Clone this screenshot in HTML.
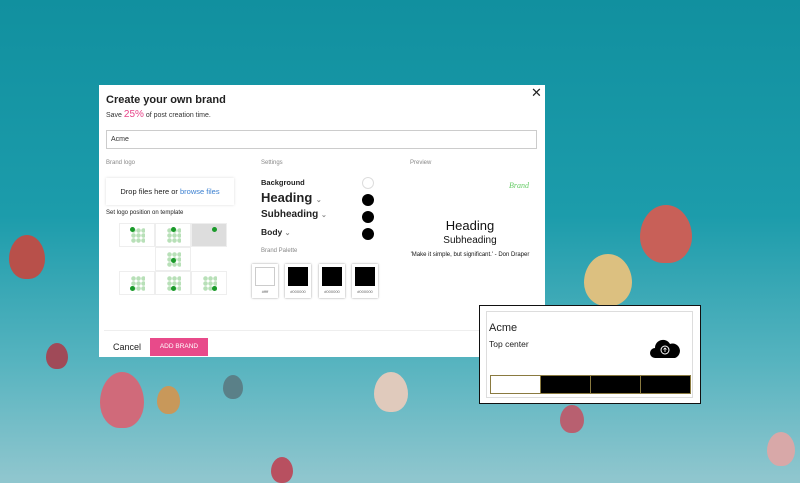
<!DOCTYPE html>
<html><head><style>
*{margin:0;padding:0;box-sizing:border-box}
html{background:#8fc6ce}
body{width:800px;height:479px;overflow:hidden;position:relative;font-family:"Liberation Sans",sans-serif;background:linear-gradient(180deg,#11909f 0%,#1c9cab 45%,#55b3bf 75%,#8fc6ce 100%)}
.a{position:absolute}
.b{position:absolute;border-radius:50% 50% 45% 45%/55% 55% 45% 45%}
.modal{left:99px;top:85px;width:446px;height:272px;background:#fff}
.cell{position:absolute;width:36px;height:24px;border:1px solid #eee;background:#fff}
.dots{position:absolute;left:11px;top:4px;width:14px;height:15px;background:radial-gradient(circle,#b8e0b8 2px,transparent 2.5px) 0 0/5px 5px}
.gd{position:absolute;width:5px;height:5px;border-radius:50%;background:#1a9a2a}
.sw{position:absolute;width:26px;height:34px;background:#fff;box-shadow:0 0 2px #999}
.sw i{position:absolute;left:3px;top:3px;width:20px;height:19px;background:#000}
.sw b{position:absolute;left:0;right:0;top:25px;font-size:4px;text-align:center;color:#666;font-weight:normal}
.dot{position:absolute;left:263px;width:12px;height:12px;border-radius:50%;background:#000}
</style></head><body>
<div class="b" style="left:9px;top:235px;width:36px;height:44px;background:#b8504a"></div>
<div class="b" style="left:640px;top:205px;width:52px;height:58px;background:#c86058"></div>
<div class="b" style="left:584px;top:254px;width:48px;height:52px;background:#dcc080"></div>
<div class="b" style="left:46px;top:343px;width:22px;height:26px;background:#a04a58"></div>
<div class="b" style="left:100px;top:372px;width:44px;height:56px;background:#d06a7a"></div>
<div class="b" style="left:157px;top:386px;width:23px;height:28px;background:#c8985a"></div>
<div class="b" style="left:223px;top:375px;width:20px;height:24px;background:#5a8088"></div>
<div class="b" style="left:374px;top:372px;width:34px;height:40px;background:#e0cabc"></div>
<div class="b" style="left:560px;top:405px;width:24px;height:28px;background:#b86070"></div>
<div class="b" style="left:271px;top:457px;width:22px;height:26px;background:#b85060"></div>
<div class="b" style="left:767px;top:432px;width:28px;height:34px;background:#d8a8a8"></div>

<div class="a modal">
<div class="a" style="left:432px;top:0px;font-size:13px;color:#222">✕</div>
<div class="a" style="left:7px;top:9px;font-size:11px;font-weight:bold;color:#222">Create your own brand</div>
<div class="a" style="left:7px;top:24px;font-size:7px;color:#333">Save <span style="color:#e8458a;font-size:10px">25%</span> of post creation time.</div>
<div class="a" style="left:7px;top:45px;width:431px;height:19px;border:1px solid #ccc;font-size:7px;padding:5px 4px;color:#333">Acme</div>
<div class="a" style="left:7px;top:75px;font-size:6px;color:#888">Brand logo</div>
<div class="a" style="left:162px;top:75px;font-size:6px;color:#888">Settings</div>
<div class="a" style="left:311px;top:75px;font-size:6px;color:#888">Preview</div>
<div class="a" style="left:7px;top:93px;width:128px;height:27px;box-shadow:0 0 3px #ddd;font-size:7.5px;color:#222;text-align:center;line-height:27px">Drop files here or <span style="color:#3a7fd0">browse files</span></div>
<div class="a" style="left:7px;top:125px;font-size:6px;color:#222">Set logo position on template</div>
<div class="a" style="left:20px;top:138px;width:108px;height:72px">
 <div class="cell" style="left:0;top:0"><div class="dots"></div><div class="gd" style="left:10px;top:3px"></div></div>
 <div class="cell" style="left:36px;top:0"><div class="dots"></div><div class="gd" style="left:15px;top:3px"></div></div>
 <div class="cell" style="left:72px;top:0;background:#ddd"><div class="gd" style="left:20px;top:3px"></div></div>
 <div class="cell" style="left:36px;top:24px"><div class="dots"></div><div class="gd" style="left:15px;top:10px"></div></div>
 <div class="cell" style="left:0;top:48px"><div class="dots"></div><div class="gd" style="left:10px;top:14px"></div></div>
 <div class="cell" style="left:36px;top:48px"><div class="dots"></div><div class="gd" style="left:15px;top:14px"></div></div>
 <div class="cell" style="left:72px;top:48px"><div class="dots"></div><div class="gd" style="left:20px;top:14px"></div></div>
</div>
<div class="a" style="left:162px;top:93px;font-size:7.5px;font-weight:bold;color:#222">Background</div>
<div class="a" style="left:162px;top:105px;font-size:13px;font-weight:bold;color:#222">Heading <span style="font-size:7px;color:#888">⌄</span></div>
<div class="a" style="left:162px;top:124px;font-size:10px;font-weight:bold;color:#222">Subheading <span style="font-size:7px;color:#888">⌄</span></div>
<div class="a" style="left:162px;top:142px;font-size:8.5px;font-weight:bold;color:#222">Body <span style="font-size:7px;color:#888">⌄</span></div>
<div class="dot" style="top:92px;background:#fff;border:1px solid #ddd"></div>
<div class="dot" style="top:109px"></div>
<div class="dot" style="top:126px"></div>
<div class="dot" style="top:143px"></div>
<div class="a" style="left:162px;top:163px;font-size:6px;color:#888">Brand Palette</div>
<div class="sw" style="left:153px;top:179px"><i style="background:#fff;border:1px solid #ccc"></i><b>#ffff</b></div>
<div class="sw" style="left:186px;top:179px"><i></i><b>#000000</b></div>
<div class="sw" style="left:220px;top:179px"><i></i><b>#000000</b></div>
<div class="sw" style="left:253px;top:179px"><i></i><b>#000000</b></div>
<div class="a" style="left:410px;top:96px;font-size:8px;font-style:italic;color:#6c6;font-family:'Liberation Serif',serif">Brand</div>
<div class="a" style="left:300px;top:133px;width:142px;text-align:center;font-size:13px;color:#111">Heading</div>
<div class="a" style="left:300px;top:150px;width:142px;text-align:center;font-size:10px;color:#111">Subheading</div>
<div class="a" style="left:300px;top:167px;width:142px;text-align:center;font-size:6px;color:#111">'Make it simple, but significant.' - Don Draper</div>
<div class="a" style="left:5px;top:245px;width:436px;height:1px;background:#eee"></div>
<div class="a" style="left:14px;top:257px;font-size:9px;color:#222">Cancel</div>
<div class="a" style="left:51px;top:253px;width:58px;height:18px;background:#e84a8a;color:#fff;font-size:6.5px;text-align:center;line-height:18px">ADD BRAND</div>
</div>

<div class="a" style="left:479px;top:305px;width:222px;height:99px;background:#fff;border:1px solid #111">
<div class="a" style="left:6px;top:5px;width:207px;height:87px;border:1px solid #ddd"></div>
<div class="a" style="left:9px;top:16px;font-size:11px;color:#222">Acme</div>
<div class="a" style="left:9px;top:33px;font-size:8.5px;color:#222">Top center</div>
<svg class="a" style="left:170px;top:29px" width="30" height="25" viewBox="0 0 30 25"><path d="M5 23a5 5 0 0 1 0-10a8 8 0 0 1 15-4a6 6 0 0 1 5 14z" fill="#000"/><circle cx="15" cy="15" r="4" fill="none" stroke="#fff" stroke-width="1"/><path d="M15 17v-4M13.5 14.5l1.5-1.5l1.5 1.5" stroke="#fff" stroke-width="0.8" fill="none"/></svg>
<div class="a" style="left:10px;top:69px;width:201px;height:19px;border:1px solid #8a7a40;display:flex">
<div style="flex:1;background:#fff;border-right:1px solid #8a7a40"></div>
<div style="flex:1;background:#000;border-right:1px solid #8a7a40"></div>
<div style="flex:1;background:#000;border-right:1px solid #8a7a40"></div>
<div style="flex:1;background:#000"></div>
</div>
</div>
</body></html>
